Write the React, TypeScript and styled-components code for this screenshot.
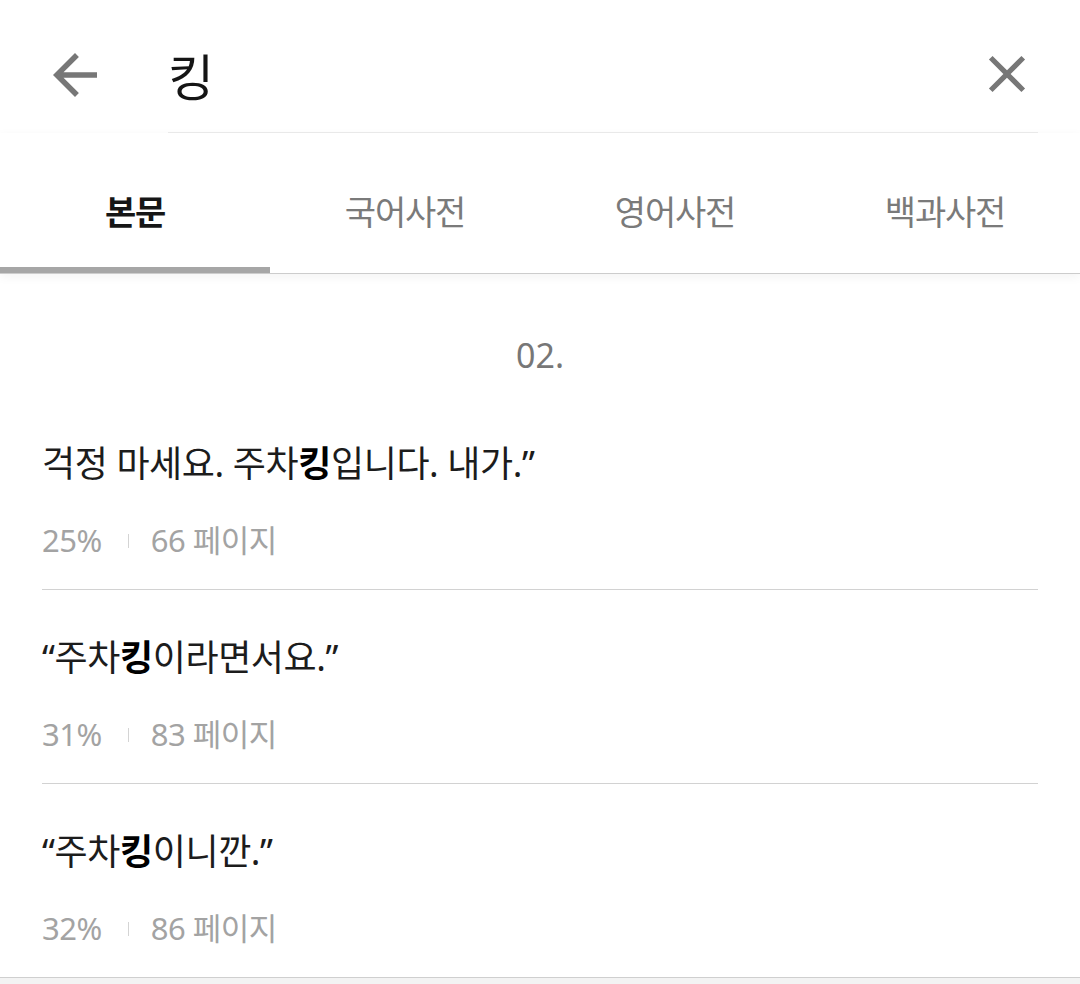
import React from "react";
import styled, { createGlobalStyle } from "styled-components";

const Global = createGlobalStyle`
  html, body { margin: 0; padding: 0; background: #f3f3f3; }
  body { font-family: "Noto Sans", "Noto Sans CJK KR", sans-serif; -webkit-font-smoothing: antialiased; }
  * { box-sizing: border-box; }
`;

const Page = styled.div`
  width: 1080px;
  background: #ffffff;
  border-bottom: 1px solid #cfcfcf;
`;

const Header = styled.header`
  display: flex;
  height: 133px;
  padding: 0 42px;
  background: #fff;
`;

const IconButton = styled.button<{ $size: number; $offset: number }>`
  display: flex;
  align-items: center;
  justify-content: center;
  border: 0;
  padding: ${(p) => p.$offset}px 0 0;
  margin: 0;
  background: transparent;
  width: ${(p) => p.$size}px;
  color: #777777;
  svg { display: block; width: ${(p) => p.$size}px; height: ${(p) => p.$size}px; }
`;

const SearchField = styled.div`
  flex: 1;
  display: flex;
  align-items: center;
  margin-left: 60px;
  padding-top: 16px;
  border-bottom: 1px solid #ececec;
`;

const Query = styled.div`
  flex: 1;
  font-family: "Noto Sans CJK KR", sans-serif;
  font-size: 50px;
  line-height: 60px;
  color: #151515;
`;

const Tabs = styled.nav`
  position: relative;
  z-index: 1;
  display: grid;
  grid-template-columns: repeat(4, 1fr);
  border-bottom: 1px solid #cccccc;
  box-shadow: 0 3px 10px rgba(0, 0, 0, 0.05);
  background: #fff;
`;

const Tab = styled.div<{ $active?: boolean }>`
  height: 140px;
  padding-top: 56px;
  text-align: center;
  font-family: "Noto Sans CJK KR", sans-serif;
  font-size: 34px;
  line-height: 44px;
  letter-spacing: -1.2px;
  font-weight: ${(p) => (p.$active ? 700 : 400)};
  color: ${(p) => (p.$active ? "#161616" : "#7a7a7a")};
  border-bottom: 6px solid ${(p) => (p.$active ? "#a6a6a6" : "transparent")};
`;

const Content = styled.main`
  padding: 59px 42px 0;
`;

const Chapter = styled.div`
  text-align: center;
  font-family: "Noto Sans", sans-serif;
  font-size: 34px;
  line-height: 44px;
  color: #777777;
  margin-bottom: 19px;
`;

const List = styled.ul`
  list-style: none;
  margin: 0;
  padding: 0;
`;

const Item = styled.li`
  padding: 44px 0 29px;
  border-bottom: 1px solid #d2d2d2;
  &:last-child { border-bottom: 0; }
`;

const Sentence = styled.div`
  font-family: "Noto Sans", "Noto Sans CJK KR", sans-serif;
  font-size: 36px;
  line-height: 48px;
  letter-spacing: -0.4px;
  color: #1c1c1c;
  margin-bottom: 32px;
  white-space: nowrap;
  b { font-weight: 700; color: #000; }
`;

const Meta = styled.div`
  display: flex;
  align-items: center;
  font-family: "Noto Sans", "Noto Sans CJK KR", sans-serif;
  font-size: 31px;
  line-height: 40px;
  letter-spacing: -0.5px;
  color: #a3a3a3;
`;

const Sep = styled.span`
  display: inline-block;
  width: 1px;
  height: 14px;
  background: #d4d4d4;
  margin: 2px 22px 0 26px;
`;

const BackIcon = () => (
  <svg viewBox="0 0 24 24" fill="currentColor">
    <path d="M20 11H7.83l5.59-5.59L12 4l-8 8 8 8 1.41-1.41L7.83 13H20v-2z" />
  </svg>
);

const CloseIcon = () => (
  <svg viewBox="0 0 24 24" fill="currentColor">
    <path d="M19 6.41L17.59 5 12 10.59 6.41 5 5 6.41 10.59 12 5 17.59 6.41 19 12 13.41 17.59 19 19 17.59 13.41 12z" />
  </svg>
);

const results = [
  { before: "걱정 마세요. 주차", after: "입니다. 내가.”", pct: "25%", page: "66 페이지" },
  { before: "“주차", after: "이라면서요.”", pct: "31%", page: "83 페이지" },
  { before: "“주차", after: "이니깐.”", pct: "32%", page: "86 페이지" },
];

const tabs = ["본문", "국어사전", "영어사전", "백과사전"];

export default function App() {
  return (
    <>
      <Global />
      <Page>
        <Header>
          <IconButton $size={66} $offset={16} aria-label="back">
            <BackIcon />
          </IconButton>
          <SearchField>
            <Query>킹</Query>
            <IconButton $size={62} $offset={0} aria-label="clear">
              <CloseIcon />
            </IconButton>
          </SearchField>
        </Header>
        <Tabs>
          {tabs.map((t, i) => (
            <Tab key={t} $active={i === 0}>
              {t}
            </Tab>
          ))}
        </Tabs>
        <Content>
          <Chapter>02.</Chapter>
          <List>
            {results.map((r) => (
              <Item key={r.pct}>
                <Sentence>
                  {r.before}
                  <b>킹</b>
                  {r.after}
                </Sentence>
                <Meta>
                  <span>{r.pct}</span>
                  <Sep />
                  <span>{r.page}</span>
                </Meta>
              </Item>
            ))}
          </List>
        </Content>
      </Page>
    </>
  );
}
